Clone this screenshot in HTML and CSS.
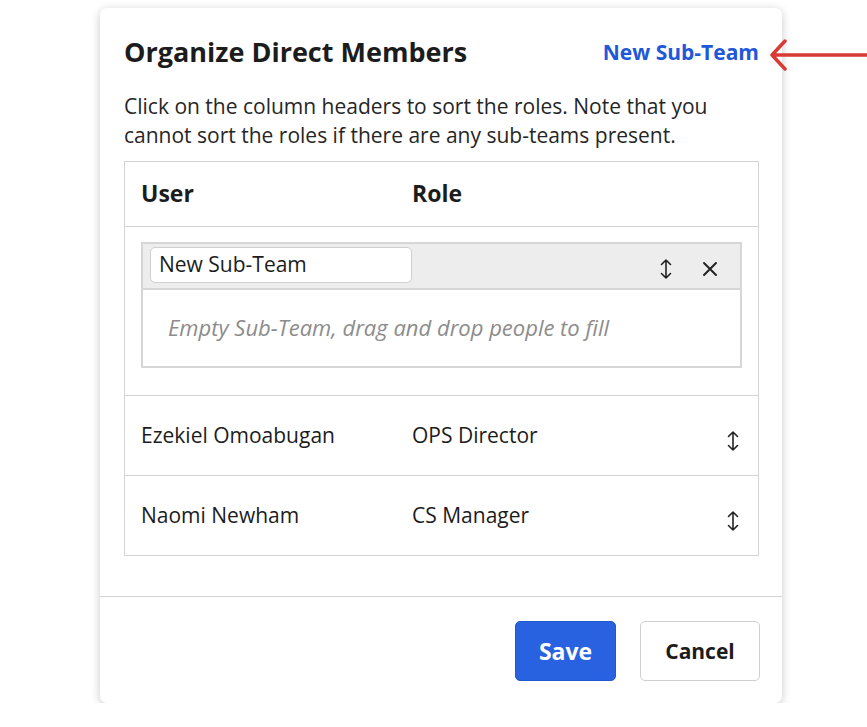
FILE: index.html
```html
<!DOCTYPE html>
<html>
<head>
<meta charset="utf-8">
<link rel="stylesheet" href="styles.css">
</head>
<body>
<div class="card">
  <div class="body">
    <div class="head">
      <h1 class="title">Organize Direct Members</h1>
      <a class="link">New Sub-Team</a>
    </div>
    <p class="desc">Click on the column headers to sort the roles. Note that you cannot sort the roles if there are any sub-teams present.</p>
    <div class="table">
      <div class="thead">
        <div class="col-user">User</div>
        <div class="col-role">Role</div>
      </div>
      <div class="subrow">
        <div class="subteam">
          <div class="subhead">
            <div class="input">New Sub-Team</div>
            <div class="subicons">
              <svg class="ic-sort" width="12" height="22" viewBox="0 0 12 22"><path d="M6 2 V20 M1.5 6.5 L6 2 L10.5 6.5 M1.5 15.5 L6 20 L10.5 15.5" fill="none" stroke="#222" stroke-width="1.6" stroke-linecap="round" stroke-linejoin="round"/></svg>
              <svg class="ic-x" width="16" height="16" viewBox="0 0 16 16"><path d="M2 2 L14 14 M14 2 L2 14" fill="none" stroke="#222" stroke-width="2" stroke-linecap="round"/></svg>
            </div>
          </div>
          <div class="subempty">Empty Sub-Team, drag and drop people to fill</div>
        </div>
      </div>
      <div class="row">
        <div class="col-user">Ezekiel Omoabugan</div>
        <div class="col-role">OPS Director</div>
        <svg class="ic-sort row-ic" width="12" height="22" viewBox="0 0 12 22"><path d="M6 2 V20 M1.5 6.5 L6 2 L10.5 6.5 M1.5 15.5 L6 20 L10.5 15.5" fill="none" stroke="#222" stroke-width="1.6" stroke-linecap="round" stroke-linejoin="round"/></svg>
      </div>
      <div class="row">
        <div class="col-user">Naomi Newham</div>
        <div class="col-role">CS Manager</div>
        <svg class="ic-sort row-ic" width="12" height="22" viewBox="0 0 12 22"><path d="M6 2 V20 M1.5 6.5 L6 2 L10.5 6.5 M1.5 15.5 L6 20 L10.5 15.5" fill="none" stroke="#222" stroke-width="1.6" stroke-linecap="round" stroke-linejoin="round"/></svg>
      </div>
    </div>
  </div>
  <div class="foot">
    <button class="btn btn-save">Save</button>
    <button class="btn btn-cancel">Cancel</button>
  </div>
  <svg class="arrow" width="100" height="34" viewBox="0 0 100 34"><path d="M3 17 H98 M16 3 L3 17 L16 31" fill="none" stroke="#d93a34" stroke-width="3.5" stroke-linecap="round" stroke-linejoin="round"/></svg>
</div>
</body>
</html>
```
FILE: styles.css
```css
html, body { margin: 0; padding: 0; background: #fff; }
body {
  font-family: "Open Sans", "Noto Sans", sans-serif;
  color: #1c1c1c;
  padding: 8px 0 0 100px;
}
.card {
  position: relative;
  width: 682px;
  height: 695px;
  background: #fff;
  border-radius: 7px;
  box-shadow: 0 2px 10px rgba(0,0,0,0.22);
  box-sizing: border-box;
  display: flex;
  flex-direction: column;
}
.body { padding: 22px 23px 0 24px; flex: 1; }
.head { display: flex; justify-content: space-between; align-items: center; height: 42px; }
.title { margin: 0; font-size: 27px; font-weight: 700; letter-spacing: 0; }
.link { color: #1f58d8; font-weight: 700; font-size: 21px; margin-top: 2px; }
.desc { margin: 20px 0 0 0; font-size: 21px; line-height: 29px; color: #262626; }
.table { margin-top: 11px; border: 1px solid #d4d4d4; }
.thead { display: flex; height: 64px; align-items: center; border-bottom: 1px solid #d4d4d4; font-weight: 700; font-size: 23px; }
.thead .col-user, .thead .col-role { margin-top: -2px; }
.col-user { width: 271px; padding-left: 16px; }
.col-role { flex: 1; }
.subrow { padding: 15px 16px 27px 16px; border-bottom: 1px solid #d4d4d4; }
.subteam { border: 2px solid #d6d6d6; background: #ededed; }
.subhead { display: flex; align-items: center; height: 44px; padding-left: 7px; }
.input { width: 262px; height: 36px; box-sizing: border-box; background: #fff; border: 1px solid #cfcfcf; border-radius: 5px; font-size: 21px; line-height: 33px; padding-left: 8px; margin-top: -3px; }
.subicons { margin-left: auto; display: flex; align-items: center; gap: 30px; padding-right: 22px; margin-top: 6px; }
.subempty { background: #fff; border-top: 2px solid #d6d6d6; height: 78px; box-sizing: border-box; font-style: italic; color: #8c8c8c; font-size: 22px; display: flex; align-items: center; padding-left: 25px; padding-bottom: 2px; }
.row { display: flex; align-items: center; height: 79px; border-bottom: 1px solid #d4d4d4; font-size: 21px; position: relative; }
.row:last-child { border-bottom: none; }
.row .col-user { margin-top: -2px; }
.row .col-role { margin-top: -2px; }
.row-ic { margin-right: 19px; margin-top: 10px; }
.foot { border-top: 1px solid #d4d4d4; height: 107px; box-sizing: border-box; display: flex; justify-content: flex-end; align-items: flex-start; padding: 24px 22px 0 0; gap: 24px; }
.btn { height: 60px; border-radius: 5px; font-family: inherit; font-size: 21px; font-weight: 700; cursor: pointer; }
.btn-save { width: 101px; background: #2962e0; color: #fff; border: 1px solid #2458cf; font-size: 23px; }
.btn-cancel { width: 120px; background: #fff; color: #1c1c1c; border: 1px solid #cfcfcf; }
.arrow { position: absolute; left: 669px; top: 30px; }
```
